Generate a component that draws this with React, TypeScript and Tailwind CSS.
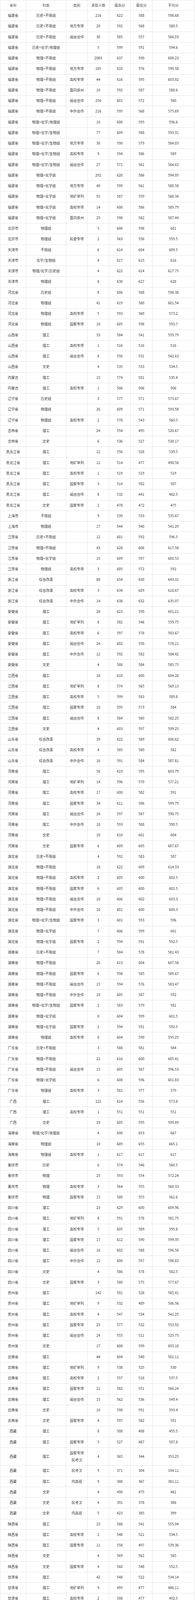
type Row = [string, string, string, string, string, string, string]

const headers = ["省份", "科类", "类别", "录取人数", "最高分", "最低分", "平均分"]

const rows: Row[] = [
  ["福建省", "历史+不限组", "", "216", "622", "588", "598.68"],
  ["福建省", "历史+不限组", "地方专项", "20", "592", "568", "580.5"],
  ["福建省", "历史+不限组", "闽台合作", "30", "585", "557", "566.03"],
  ["福建省", "历史+化学/地理组", "", "5", "599", "591", "594.6"],
  ["福建省", "物理+不限组", "", "2083", "637", "590", "608.23"],
  ["福建省", "物理+不限组", "地方专项", "185", "610", "576", "590.58"],
  ["福建省", "物理+不限组", "高校专项", "44", "616", "595", "603.02"],
  ["福建省", "物理+不限组", "面向泉州", "10", "592", "587", "588.6"],
  ["福建省", "物理+不限组", "闽台合作", "256", "601", "572", "580"],
  ["福建省", "物理+不限组", "中外合作", "216", "595", "568", "575.69"],
  ["福建省", "物理+化学/地理组", "", "10", "600", "595", "596.6"],
  ["福建省", "物理+化学/生物组", "", "77", "609", "588", "593.31"],
  ["福建省", "物理+化学/生物组", "地方专项", "30", "590", "579", "584.03"],
  ["福建省", "物理+化学/生物组", "高校专项", "9", "594", "586", "589"],
  ["福建省", "物理+化学/生物组", "闽台合作", "27", "571", "561", "564.63"],
  ["福建省", "物理+化学组", "", "292", "620", "586", "594.05"],
  ["福建省", "物理+化学组", "地方专项", "40", "599", "561", "580.58"],
  ["福建省", "物理+化学组", "地矿单列", "91", "587", "559", "568.34"],
  ["福建省", "物理+化学组", "高校专项", "14", "600", "586", "589.79"],
  ["福建省", "物理+化学组", "面向泉州", "25", "598", "582", "587.44"],
  ["北京市", "物理组", "", "5", "606", "598", "601"],
  ["北京市", "物理组", "民委专项", "2", "563", "556", "559.5"],
  ["天津市", "不限组", "", "6", "614", "604", "609.5"],
  ["天津市", "化学/生物组", "", "4", "617", "615", "616"],
  ["天津市", "物理/化学/历史组", "", "4", "622", "614", "617.75"],
  ["天津市", "物理组", "", "8", "630", "627", "628"],
  ["河北省", "历史组", "", "8", "606", "588", "598.38"],
  ["河北省", "物理组", "", "41", "619", "580", "601.54"],
  ["河北省", "物理组", "高校专项", "5", "593", "560", "573.2"],
  ["河北省", "物理组", "国家专项", "10", "605", "598", "593.7"],
  ["山西省", "理工", "", "33", "584", "541", "559.79"],
  ["山西省", "理工", "高校专项", "1", "516", "516", "516"],
  ["山西省", "理工", "闽台合作", "8", "550", "531", "542.63"],
  ["山西省", "文史", "", "4", "535", "533", "534.5"],
  ["内蒙古", "理工", "", "15", "574", "501", "535.4"],
  ["内蒙古", "理工", "高校专项", "1", "506", "506", "506"],
  ["辽宁省", "历史组", "", "3", "577", "571", "573.67"],
  ["辽宁省", "物理组", "", "26", "609", "571", "593.58"],
  ["辽宁省", "物理组", "高校专项", "2", "578", "543", "560.5"],
  ["吉林省", "理工", "", "24", "554", "495", "520.67"],
  ["吉林省", "文史", "", "6", "536", "527", "530.17"],
  ["黑龙江省", "理工", "", "12", "556", "528", "539.5"],
  ["黑龙江省", "理工", "地矿单列", "12", "514", "477", "498.58"],
  ["黑龙江省", "理工", "高校专项", "1", "519", "519", "519"],
  ["黑龙江省", "理工", "国家专项", "3", "514", "502", "507"],
  ["黑龙江省", "理工", "闽台合作", "8", "532", "441", "482.5"],
  ["黑龙江省", "文史", "国家专项", "2", "478", "472", "475"],
  ["上海市", "不限组", "", "9", "539", "533", "535.67"],
  ["上海市", "物理组", "", "17", "544", "540", "541.29"],
  ["江苏省", "历史+不限组", "", "12", "601", "592", "596.5"],
  ["江苏省", "物理+不限组", "", "43", "628", "606", "617.58"],
  ["江苏省", "物理+化学组", "", "15", "609", "597", "600.53"],
  ["江苏省", "物理组", "高校专项", "3", "605", "572", "592"],
  ["浙江省", "综合改革", "", "88", "654", "630", "643.31"],
  ["浙江省", "综合改革", "高校专项", "3", "634", "609", "618.67"],
  ["浙江省", "综合改革", "中外合作", "14", "638", "632", "635.07"],
  ["安徽省", "理工", "", "28", "623", "590", "601.21"],
  ["安徽省", "理工", "地矿单列", "8", "582", "546", "559.75"],
  ["安徽省", "理工", "高校专项", "6", "597", "578", "583.67"],
  ["安徽省", "理工", "闽台合作", "24", "602", "550", "578.21"],
  ["安徽省", "理工", "中外合作", "12", "592", "582", "584.42"],
  ["安徽省", "文史", "", "4", "588", "584", "585.75"],
  ["江西省", "理工", "", "18", "610", "600", "604.28"],
  ["江西省", "理工", "地矿单列", "8", "574", "565", "569.13"],
  ["江西省", "理工", "高校专项", "5", "599", "583", "589.8"],
  ["江西省", "理工", "国家专项", "10", "595", "573", "584"],
  ["江西省", "理工", "闽台合作", "8", "584", "580", "582.25"],
  ["江西省", "文史", "", "4", "603", "597", "599.25"],
  ["山东省", "综合改革", "", "39", "622", "589", "606.62"],
  ["山东省", "综合改革", "高校专项", "4", "585", "580", "582"],
  ["山东省", "综合改革", "中外合作", "16", "591", "584", "587.81"],
  ["河南省", "理工", "", "56", "619", "595", "603.79"],
  ["河南省", "理工", "地矿单列", "14", "596", "570", "577.21"],
  ["河南省", "理工", "高校专项", "17", "600", "582", "591"],
  ["河南省", "理工", "国家专项", "34", "611", "586", "599.79"],
  ["河南省", "理工", "闽台合作", "24", "597", "587", "590.75"],
  ["河南省", "理工", "中外合作", "10", "593", "588", "590.5"],
  ["河南省", "文史", "", "10", "610", "601", "604"],
  ["河南省", "文史", "国家专项", "6", "609", "605", "607.67"],
  ["湖北省", "历史+不限组", "", "4", "592", "583", "587"],
  ["湖北省", "物理+不限组", "", "18", "622", "609", "614.33"],
  ["湖北省", "物理+不限组", "高校专项", "2", "605", "600", "602.5"],
  ["湖北省", "物理+不限组", "国家专项", "6", "605", "600", "602.5"],
  ["湖北省", "物理+不限组", "闽台合作", "10", "606", "602", "603.3"],
  ["湖北省", "物理+不限组", "中外合作", "10", "601", "600", "600.3"],
  ["湖北省", "物理+化学/生物组", "国家专项", "3", "601", "593", "596"],
  ["湖北省", "物理+化学组", "", "7", "606", "599", "601"],
  ["湖北省", "物理+化学组", "国家专项", "2", "594", "591", "592.5"],
  ["湖南省", "历史+不限组", "", "7", "584", "578", "581.43"],
  ["湖南省", "物理+不限组", "", "26", "613", "604", "607.58"],
  ["湖南省", "物理+不限组", "国家专项", "6", "598", "585", "589.67"],
  ["湖南省", "物理+不限组", "闽台合作", "15", "594", "576", "583.47"],
  ["湖南省", "物理+不限组", "中外合作", "10", "605", "587", "592"],
  ["湖南省", "物理+化学/生物组", "国家专项", "2", "583", "579", "581"],
  ["湖南省", "物理+化学组", "", "8", "604", "599", "601.5"],
  ["湖南省", "物理+化学组", "国家专项", "2", "594", "591", "592.5"],
  ["湖南省", "物理组", "高校专项", "8", "604", "590", "595.25"],
  ["广东省", "历史+不限组", "", "3", "588", "581", "584"],
  ["广东省", "物理+不限组", "", "22", "616", "600", "605.41"],
  ["广东省", "物理+不限组", "闽台合作", "15", "605", "587", "596.53"],
  ["广东省", "物理+化学组", "", "6", "608", "596", "601.83"],
  ["广东省", "物理组", "高校专项", "3", "581", "577", "579"],
  ["广西", "理工", "", "122", "614", "556", "573.8"],
  ["广西", "理工", "高校专项", "1", "551", "551", "551"],
  ["广西", "文史", "", "19", "605", "595", "599.89"],
  ["海南省", "物理/化学/地理组", "", "4", "690", "653", "667"],
  ["海南省", "物理组", "", "10", "689", "655", "665.1"],
  ["海南省", "物理组", "高校专项", "1", "617", "617", "617"],
  ["重庆市", "历史", "", "6", "574", "546", "560.5"],
  ["重庆市", "物理", "", "25", "593", "554", "572.24"],
  ["重庆市", "物理", "高校专项", "3", "564", "555", "560.33"],
  ["重庆市", "物理", "国家专项", "15", "580", "555", "561.6"],
  ["四川省", "理工", "", "23", "629", "600", "609.96"],
  ["四川省", "理工", "地矿单列", "8", "591", "578", "581.75"],
  ["四川省", "理工", "高校专项", "5", "605", "589", "595.8"],
  ["四川省", "理工", "国家专项", "17", "612", "590", "599.35"],
  ["四川省", "理工", "闽台合作", "16", "602", "588", "596.56"],
  ["四川省", "理工", "中外合作", "12", "600", "597", "598.83"],
  ["四川省", "文史", "", "4", "586", "578", "582.5"],
  ["四川省", "文史", "国家专项", "3", "580", "575", "577.67"],
  ["贵州省", "理工", "", "142", "591", "528", "565.41"],
  ["贵州省", "理工", "地矿单列", "9", "532", "489", "506.56"],
  ["贵州省", "理工", "高校专项", "4", "547", "534", "541.25"],
  ["贵州省", "理工", "国家专项", "25", "577", "532", "553.92"],
  ["贵州省", "理工", "闽台合作", "24", "555", "511", "525.75"],
  ["贵州省", "文史", "", "17", "608", "599", "603.18"],
  ["云南省", "理工", "", "44", "604", "540", "581.11"],
  ["云南省", "理工", "地矿单列", "9", "538", "525", "530"],
  ["云南省", "理工", "高校专项", "2", "557", "518", "537.5"],
  ["云南省", "理工", "国家专项", "21", "582", "551", "566.24"],
  ["云南省", "理工", "闽台合作", "15", "562", "536", "549.4"],
  ["云南省", "文史", "", "10", "598", "591", "593.4"],
  ["云南省", "文史", "国家专项", "4", "597", "582", "591"],
  ["西藏", "理工", "", "8", "508", "408", "455.5"],
  ["西藏", "理工", "国家专项", "5", "527", "487", "507.8"],
  ["西藏", "理工", "国家专项|民考汉", "4", "365", "344", "353.25"],
  ["西藏", "理工", "民考汉", "9", "371", "304", "334.11"],
  ["西藏", "理工", "内高班", "9", "388", "367", "381.11"],
  ["西藏", "文史", "", "4", "490", "475", "481"],
  ["西藏", "文史", "民考汉", "4", "391", "378", "386"],
  ["西藏", "文史", "内高班", "5", "423", "385", "399"],
  ["陕西省", "理工", "", "23", "588", "541", "555.04"],
  ["陕西省", "理工", "高校专项", "2", "548", "521", "534.5"],
  ["陕西省", "理工", "国家专项", "11", "558", "497", "539.36"],
  ["陕西省", "文史", "", "4", "569", "562", "565"],
  ["陕西省", "文史", "国家专项", "4", "560", "548", "552.5"],
  ["甘肃省", "理工", "", "42", "548", "522", "534.14"],
  ["甘肃省", "理工", "地矿单列", "9", "495", "477", "486.11"],
  ["甘肃省", "理工", "高校专项", "2", "508", "477", "492.5"],
  ["甘肃省", "理工", "闽台合作", "10", "524", "502", "508.6"],
  ["甘肃省", "文史", "", "8", "558", "546", "550.38"],
  ["青海省", "理工", "国家专项", "11", "478", "409", "427"],
  ["宁夏", "理工", "", "21", "506", "397", "448.48"],
  ["宁夏", "理工", "国家专项", "9", "468", "442", "452.44"],
  ["宁夏", "文史", "", "4", "551", "530", "536.75"],
  ["新疆", "理工", "", "10", "499", "469", "475.2"],
  ["新疆", "理工", "昌吉定向", "7", "519", "484", "496.71"],
  ["新疆", "理工", "国家专项", "17", "494", "447", "462.47"],
  ["新疆", "理工", "南疆单列", "2", "430", "411", "420.5"],
  ["新疆", "理工", "内高班", "21", "545", "489", "504.57"],
  ["新疆", "文史", "昌吉定向", "6", "527", "513", "519.5"],
  ["新疆", "文史", "国家专项", "5", "509", "492", "497.6"],
  ["新疆", "文史", "内高班", "9", "530", "487", "495.11"],
]

function Cell({ text }: { text: string }) {
  const lines = text.split("|")
  return (
    <div className="flex min-w-0 flex-col items-center justify-center border-r border-[#e4e4e4] text-center leading-[18px]">
      {lines.map((line, i) => (
        <span key={i} className="whitespace-nowrap">
          {line}
        </span>
      ))}
    </div>
  )
}

export default function App() {
  return (
    <div className="w-[500px] bg-white">
      <div
        className="flex w-[498px] flex-col border-l border-t border-[#e4e4e4] text-[9px] text-[#3a3a3a]"
        style={{ fontFamily: '"Noto Sans CJK SC", "Noto Sans", sans-serif' }}
      >
        <div className="grid h-[26px] shrink-0 grid-cols-[66px_103px_55px_55px_55px_56px_108px] border-b border-[#e4e4e4] text-[#555]">
          {headers.map((h) => (
            <Cell key={h} text={h} />
          ))}
        </div>
        {rows.map((row, i) =>
          row[2].includes("|") ? (
            <div
              key={i}
              className="grid h-[46.5px] shrink-0 grid-cols-[66px_103px_55px_55px_55px_56px_108px] border-b border-[#e4e4e4]"
            >
              {row.map((c, j) => (
                <Cell key={j} text={c} />
              ))}
            </div>
          ) : (
            <div
              key={i}
              className="grid h-[27.25px] shrink-0 grid-cols-[66px_103px_55px_55px_55px_56px_108px] border-b border-[#e4e4e4]"
            >
              {row.map((c, j) => (
                <Cell key={j} text={c} />
              ))}
            </div>
          )
        )}
      </div>
    </div>
  )
}
